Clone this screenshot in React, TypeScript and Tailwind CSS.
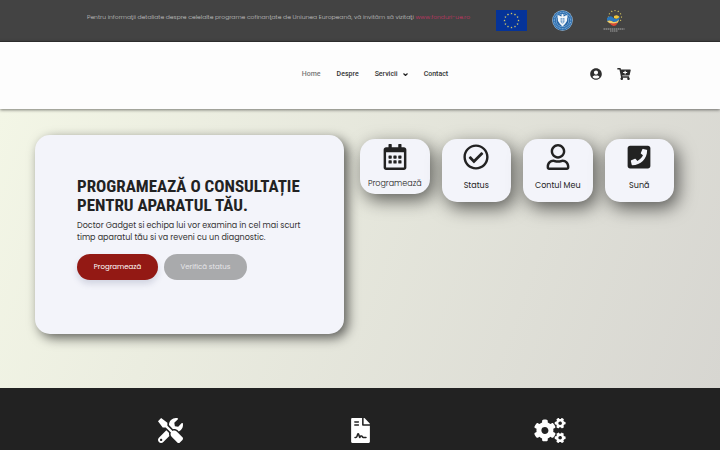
import {
  FaCartPlus,
  FaCogs,
  FaFileContract,
  FaPhoneSquare,
  FaRegCalendarAlt,
  FaRegCheckCircle,
  FaRegUser,
  FaTools,
  FaUserCircle,
} from "react-icons/fa";
import type { IconType } from "react-icons";

const STAR =
  "M0 -1 L0.22 -0.31 L0.95 -0.31 L0.36 0.12 L0.59 0.81 L0 0.38 L-0.59 0.81 L-0.36 0.12 L-0.95 -0.31 L-0.22 -0.31 Z";

const quickLinks: { label: string; icon: IconType; primary?: boolean }[] = [
  { label: "Programează", icon: FaRegCalendarAlt, primary: true },
  { label: "Status", icon: FaRegCheckCircle },
  { label: "Contul Meu", icon: FaRegUser },
  { label: "Sună", icon: FaPhoneSquare },
];

/** Twelve stars on a circle, starting at the top. */
function StarRing({
  cx,
  cy,
  radius,
  size,
  from = 0,
  to = 12,
}: {
  cx: number;
  cy: number;
  radius: number;
  size: number;
  from?: number;
  to?: number;
}) {
  const stars = [];
  for (let i = from; i < to; i++) {
    const a = (i * Math.PI) / 6;
    const x = cx + radius * Math.sin(a);
    const y = cy - radius * Math.cos(a);
    stars.push(
      <path
        key={i}
        d={STAR}
        fill="#f0dc62"
        transform={`translate(${x} ${y}) scale(${size})`}
      />,
    );
  }
  return <g>{stars}</g>;
}

function EuFlag() {
  return (
    <svg viewBox="0 0 62 42" className="h-[21px] w-[31px]" aria-hidden="true">
      <rect width="62" height="42" fill="#053399" />
      <StarRing cx={31} cy={21} radius={14} size={2.4} />
    </svg>
  );
}

function GovernmentSeal() {
  return (
    <svg viewBox="0 0 42 42" className="size-[21px]" aria-hidden="true">
      <circle cx="21" cy="21" r="20.5" fill="#a9c9e6" />
      <circle cx="21" cy="21" r="19.5" fill="#2f6fae" />
      <circle
        cx="21"
        cy="21"
        r="16.3"
        fill="none"
        stroke="#85b2dc"
        strokeWidth="2.4"
        strokeDasharray="1.6 1.5"
      />
      <circle cx="21" cy="21" r="13" fill="#9cc0e2" />
      <circle cx="21" cy="21" r="12" fill="#2765a5" />
      <path
        d="M19 10 L21 7.5 L23 10 L23 13 L31 10 L30 22 L26 28 L21 33 L16 28 L12 22 L11 10 L19 13 Z"
        fill="#f1f5f9"
      />
      <path d="M17 16 H25 V24 L21 28 L17 24 Z" fill="#7ea7cf" />
      <path d="M21 16 V27 M17 20 H25" stroke="#f1f5f9" strokeWidth="1" />
    </svg>
  );
}

function StructuralFundsLogo() {
  return (
    <svg viewBox="0 0 44 46" className="h-[23px] w-[22px]" aria-hidden="true">
      <StarRing cx={24} cy={14} radius={13} size={2} from={-3} to={5} />
      <path d="M8 16 Q14 10 20 15 Q25 21 34 14 Q32 25 22 24 Q14 19 8 22 Z" fill="#2b78bd" />
      <path d="M22 12 Q29 8 33 14 Q28 20 22 16 Z" fill="#efc63b" />
      <path d="M8 22 Q15 19 21 24 Q27 25 32 19 Q31 28 22 28 Q12 28 8 22 Z" fill="#f0cf6a" />
      <path d="M13 26 Q21 28 29 25 Q27 32 21 32 Q16 31 13 26 Z" fill="#d94835" />
      <path d="M1 38 H43" stroke="#a9a9a9" strokeWidth="2" strokeDasharray="3 1" />
      <path d="M14 42 H30" stroke="#a0a0a0" strokeWidth="2" strokeDasharray="3 1" />
    </svg>
  );
}

function FundingBar() {
  return (
    <div className="flex h-[41px] items-start justify-center bg-[#434343] pt-[10px] pr-2 font-['Poppins','Inter',sans-serif]">
      <p className="mr-[26px] text-[6px] leading-[14px] font-light whitespace-nowrap text-[#c4c4c4]">
        Pentru informaţii detaliate despre celelalte programe cofinanţate de
        Uniunea Europeană, vă invităm să vizitaţi{" "}
        <a href="#fonduri" className="text-[#cc3366]">
          www.fonduri-ue.ro
        </a>
      </p>
      <div className="flex items-start">
        <EuFlag />
        <div className="ml-[25px]">
          <GovernmentSeal />
        </div>
        <div className="ml-[30px]">
          <StructuralFundsLogo />
        </div>
      </div>
    </div>
  );
}

function SiteHeader() {
  return (
    <header className="relative grid h-[68px] grid-cols-[1fr_auto_1fr] items-start border-t border-[#2c2c2c] bg-[#fdfdfd] pt-6 shadow-[0_1px_3px_rgba(0,0,0,0.5)]">
      <nav className="col-start-2 ml-[30px] flex h-4 items-center gap-4 font-['Roboto',sans-serif] text-[7px] font-medium text-[#333]">
        <a href="#home" className="text-[#777]">
          Home
        </a>
        <a href="#despre">Despre</a>
        <a href="#servicii" className="flex items-center gap-[5px]">
          Servicii
          <svg viewBox="0 0 10 6" className="h-[3px] w-[5px]" aria-hidden="true">
            <path d="M1 1 L5 5 L9 1" fill="none" stroke="#222" strokeWidth="2.4" />
          </svg>
        </a>
        <a href="#contact">Contact</a>
      </nav>
      <div className="mr-[89px] flex items-center justify-end gap-[15px] pt-[2px] text-[#2e2e2e]">
        <a href="#cont" aria-label="Cont">
          <FaUserCircle className="size-3" />
        </a>
        <a href="#cos" aria-label="Coș">
          <FaCartPlus className="h-3 w-[14px]" />
        </a>
      </div>
    </header>
  );
}

function ConsultationCard() {
  return (
    <section className="-mt-1 h-[199px] rounded-[15px] bg-[#f3f4fa] pt-[42px] pl-[42px] text-[#222] shadow-[4px_4px_12px_rgba(0,0,0,0.6)]">
      <h1 className="font-['Roboto_Condensed','Liberation_Sans_Narrow',sans-serif] text-[17px] leading-[19px] font-bold whitespace-nowrap uppercase">
        Programează o consultație
        <br />
        pentru aparatul tău.
      </h1>
      <p className="mt-[5px] text-[8px] leading-3 whitespace-nowrap text-[#333]">
        Doctor Gadget si echipa lui vor examina în cel mai scurt
        <br />
        timp aparatul tău si va reveni cu un diagnostic.
      </p>
      <div className="mt-[10px] flex gap-[6px] text-[7px]">
        <button
          type="button"
          className="h-[26px] w-[81px] rounded-full bg-[#931914] text-white shadow-[0_4px_6px_rgba(80,90,130,0.2)]"
        >
          Programează
        </button>
        <button
          type="button"
          className="h-[26px] w-[83px] rounded-full bg-[#a9aaac] text-[#e6e6e9]"
        >
          Verifică status
        </button>
      </div>
    </section>
  );
}

function QuickLinks() {
  return (
    <div className="grid grid-cols-4 items-start gap-3">
      {quickLinks.map(({ label, icon: Icon, primary }) => (
        <a
          key={label}
          href={`#${label}`}
          className={`flex flex-col items-center rounded-[15px] bg-[#f3f4fa] pt-[5px] text-[#222] shadow-[4px_6px_18px_rgba(0,0,0,0.6)] ${
            primary ? "h-[55px]" : "h-[63px]"
          }`}
        >
          <Icon className="size-[26px]" />
          <span
            className={`text-[8px] leading-3 whitespace-nowrap ${
              primary ? "mt-2 font-light" : "mt-[10px]"
            }`}
          >
            {label}
          </span>
        </a>
      ))}
    </div>
  );
}

export default function App() {
  return (
    <div className="flex h-screen flex-col overflow-hidden">
      <FundingBar />
      <SiteHeader />
      <main className="grid h-[279px] shrink-0 grid-cols-[309fr_314fr] items-start gap-4 bg-linear-[110deg] from-[#f3f6e6] to-[#d7d6d1] pt-[30px] pr-[46px] pl-[35px] font-['Poppins','Inter',sans-serif]">
        <ConsultationCard />
        <QuickLinks />
      </main>
      <footer className="grid flex-1 grid-cols-3 items-start justify-items-center bg-[#222] px-[75px] pt-[30px] text-white">
        <FaTools className="size-[25px]" />
        <FaFileContract className="size-[25px]" />
        <FaCogs className="h-[25px] w-8" />
      </footer>
    </div>
  );
}
